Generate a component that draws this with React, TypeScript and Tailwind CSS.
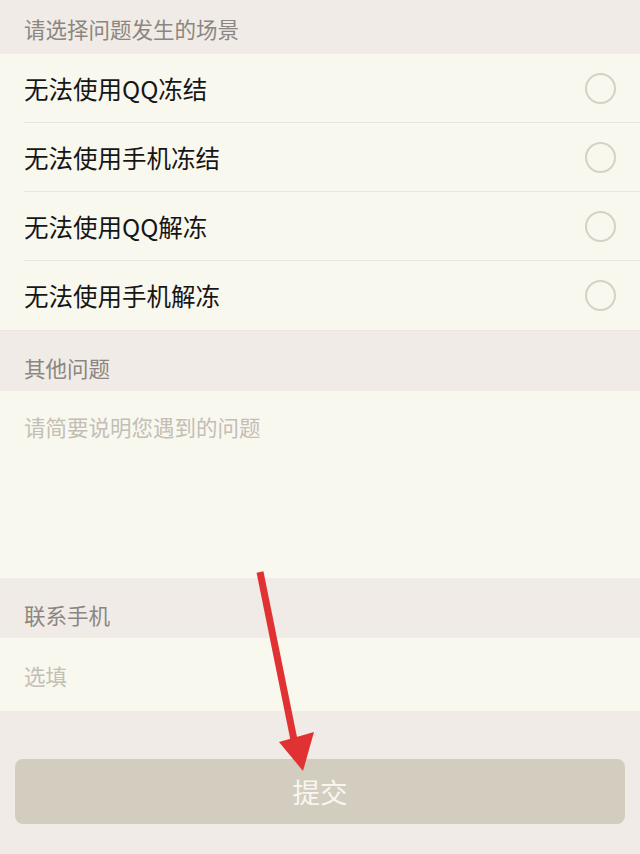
const FONT = '"Noto Sans CJK SC", "Noto Sans", sans-serif';

const OPTIONS = ["无法使用QQ冻结", "无法使用手机冻结", "无法使用QQ解冻", "无法使用手机解冻"];

function SectionHeader({ label, className = "" }: { label: string; className?: string }) {
  return (
    <div className={`flex items-center bg-[#f0ebe6] px-6 text-[21.5px] text-[#8b8680] ${className}`}>
      {label}
    </div>
  );
}

export default function App() {
  return (
    <div className="relative h-[854px] w-[640px] overflow-hidden bg-[#f0ebe6]" style={{ fontFamily: FONT }}>
      <SectionHeader label="请选择问题发生的场景" className="h-[54px] pt-1" />

      <div className="bg-[#f9f8ef]">
        {OPTIONS.map((opt, i) => (
          <div key={opt} className="pl-6">
            <div
              className={`flex h-[69px] items-center justify-between pr-6 ${
                i < OPTIONS.length - 1 ? "border-b border-[#e9e5dc]" : ""
              }`}
            >
              <span className="pt-[2px] text-[24.5px] text-[#161616]">{opt}</span>
              <span className="h-[31px] w-[31px] rounded-full border-2 border-[#d6d1c7]" />
            </div>
          </div>
        ))}
      </div>

      <SectionHeader label="其他问题" className="h-[61px] border-t border-[#ebe7e0] pt-[14px]" />

      <div className="h-[187px] bg-[#f9f8ef] px-6 pt-[20px] text-[21.5px] text-[#c3beb6]">
        请简要说明您遇到的问题
      </div>

      <SectionHeader label="联系手机" className="h-[60px] pt-[14px]" />

      <div className="flex h-[73px] items-center bg-[#f9f8ef] px-6 pt-1 text-[21.5px] text-[#c3beb6]">
        选填
      </div>

      <div className="px-[15px] pt-[48px]">
        <button className="flex h-[65px] w-full items-center justify-center rounded-lg bg-[#d3cdc0] text-[27.5px] text-[#f8f6f0]">
          提交
        </button>
      </div>

      {/* red annotation arrow */}
      <svg className="pointer-events-none absolute left-0 top-0" width="640" height="854" viewBox="0 0 640 854">
        <line x1="260" y1="572" x2="294" y2="740" stroke="#e03232" strokeWidth="7" />
        <polygon points="279,742 314,732 303,771" fill="#e03232" />
      </svg>
    </div>
  );
}
